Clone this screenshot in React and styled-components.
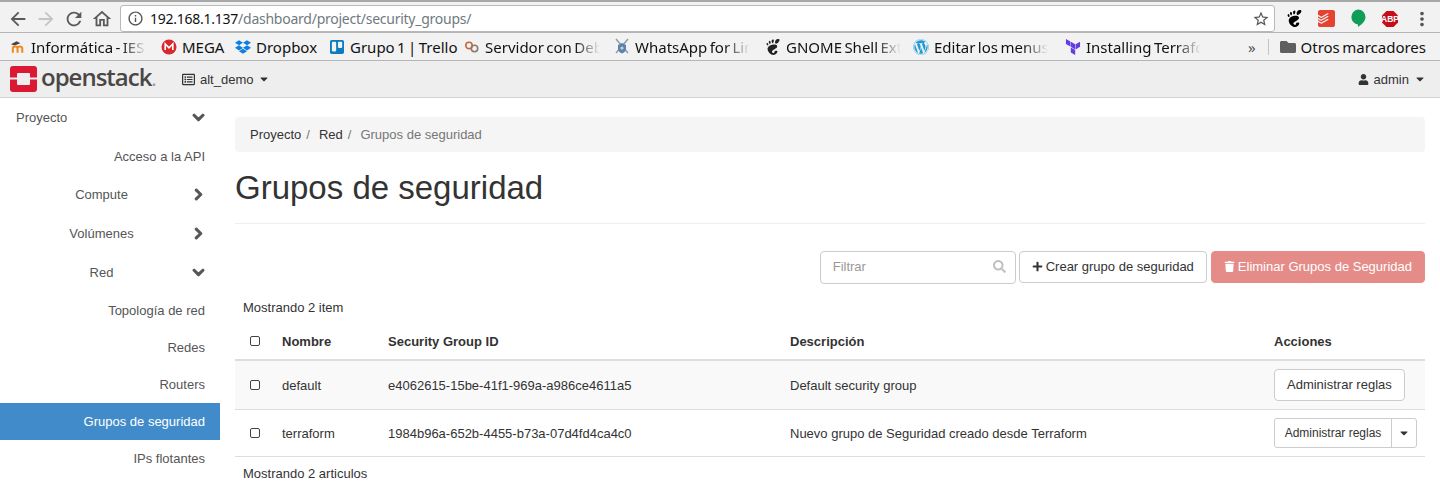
import React from 'react'
import styled, { createGlobalStyle } from 'styled-components'
import { MdArrowBack, MdArrowForward, MdRefresh, MdOutlineHome, MdInfoOutline, MdStarBorder, MdMoreVert } from 'react-icons/md'
import { FaChevronDown, FaChevronRight, FaUser, FaSearch, FaPlus, FaTrash, FaDropbox, FaTrello, FaWordpress, FaFolder, FaCaretDown, FaRegListAlt } from 'react-icons/fa'
import { SiGnome, SiTerraform, SiTodoist } from 'react-icons/si'

const Global = createGlobalStyle`
  html, body { margin: 0; padding: 0; height: 485px; overflow: hidden; background: #fff; }
  body { font-family: "Liberation Sans", Arial, sans-serif; font-size: 13px; color: #333; }
  * { box-sizing: border-box; }
`

// ---------- browser chrome ----------
const Toolbar = styled.div`
  height: 32px;
  display: flex;
  align-items: center;
  padding: 3px 0 0 4px;
  background: #f2f2f2;
  border-top: 2px solid #a8a8a8;
`
const NavButton = styled.span`
  width: 28px;
  display: flex;
  justify-content: center;
  font-size: 22px;
  color: ${p => (p.$off ? '#c4c4c4' : '#5a5a5a')};
`
const UrlBar = styled.div`
  width: 1155px;
  height: 27px;
  margin-left: 4px;
  display: flex;
  align-items: center;
  padding: 0 4px 0 6px;
  background: #fff;
  border: 1px solid #b8b8b8;
  border-radius: 3px;
  font: 14px "Noto Sans", sans-serif;
  letter-spacing: -0.25px;
  color: #111;
`
const UrlPath = styled.span`
  color: #6f7a80;
`
const UrlInfo = styled.span`
  display: flex;
  font-size: 17px;
  color: #555;
  margin-right: 6px;
`
const UrlStar = styled.span`
  display: flex;
  margin-left: auto;
  font-size: 18px;
  color: #555;
`
const Extensions = styled.div`
  display: flex;
  align-items: center;
  margin-left: 3px;
`
const Extension = styled.span`
  width: 32px;
  display: flex;
  justify-content: center;
  align-items: center;
  font-size: ${p => p.$size || 17}px;
  color: ${p => p.$color || '#000'};
`
const Bookmarks = styled.div`
  height: 29px;
  display: flex;
  align-items: center;
  padding: 0 14px 0 10px;
  background: #f2f2f2;
  border-top: 1px solid #b5b5b5;
  border-bottom: 1px solid #b5b5b5;
  font: 15px "Noto Sans", sans-serif;
  word-spacing: -1.5px;
  color: #111;
`
const Bookmark = styled.div`
  display: flex;
  align-items: center;
  gap: 5px;
  flex: none;
  width: ${p => (p.$width ? `${p.$width}px` : 'auto')};
`
const BookmarkIcon = styled.span`
  width: 16px;
  height: 16px;
  display: flex;
  align-items: center;
  justify-content: center;
  flex: none;
  font-size: 16px;
  color: ${p => p.$color || '#333'};
`
const BookmarkText = styled.span`
  white-space: nowrap;
  ${p => p.$faded && `
    width: ${p.$faded}px;
    -webkit-mask-image: linear-gradient(to right, #000 78%, transparent 100%);
    mask-image: linear-gradient(to right, #000 78%, transparent 100%);
  `}
`
const MoreBookmarks = styled.span`
  margin-left: auto;
  font-size: 15px;
  color: #555;
`
const BookmarkDivider = styled.span`
  width: 1px;
  height: 16px;
  margin: 0 11px 0 12px;
  background: #c4c4c4;
`

// ---------- openstack top bar ----------
const TopBar = styled.div`
  height: 37px;
  display: flex;
  align-items: center;
  padding: 0 14px 0 10px;
  background: #eeeeee;
  border-bottom: 1px solid #d4d4d4;
`
const Logo = styled.div`
  display: flex;
  align-items: center;
  gap: 4px;
  width: 172px;
`
const LogoText = styled.span`
  font: 600 24px/26px "Open Sans", sans-serif;
  letter-spacing: -1px;
  color: #4a4746;
  margin-top: -3px;
`
const LogoDot = styled.span`
  color: #a0a0a0;
  font-size: 18px;
`
const MenuToggle = styled.span`
  display: flex;
  align-items: center;
  gap: 5px;
  color: #333;
  ${p => p.$right && 'margin-left: auto;'}
`
const SmallCaret = styled(FaCaretDown)`
  font-size: 12px;
`

// ---------- layout ----------
const Body = styled.div`
  display: flex;
`
const Sidebar = styled.nav`
  width: 220px;
  flex: none;
`
const SideRow = styled.div`
  height: ${p => (p.$sub ? '37px' : '38.8px')};
  display: flex;
  align-items: center;
  padding: 0 15px 0 ${p => (p.$top ? '16px' : '12px')};
  color: ${p => (p.$active ? '#fff' : '#555')};
  background: ${p => (p.$active ? '#428bca' : 'transparent')};
`
const SideLabel = styled.span`
  flex: 1;
  text-align: ${p => p.$align || 'center'};
`
const SideArrow = styled.span`
  display: flex;
  width: 14px;
  justify-content: center;
  font-size: 13px;
  color: #555;
  svg { stroke: #555; stroke-width: 40px; }
`
const Main = styled.main`
  width: 1190px;
  margin-left: 15px;
  padding-top: 19px;
`
const Breadcrumb = styled.div`
  height: 35px;
  display: flex;
  align-items: center;
  padding: 0 15px;
  background: #f5f5f5;
  border-radius: 4px;
  color: #777;
`
const Crumb = styled.span`
  color: #333;
`
const CrumbSep = styled.span`
  color: #777;
  padding: 0 9px 0 5px;
`
const Title = styled.h1`
  margin: 17px 0 0;
  padding-bottom: 17px;
  font-weight: 400;
  font-size: 33px;
  line-height: 37px;
  color: #333;
  border-bottom: 1px solid #eee;
`
const Actions = styled.div`
  display: flex;
  justify-content: flex-end;
  gap: 3px;
  margin-top: 27px;
`
const SearchBox = styled.div`
  width: 196px;
  height: 33px;
  display: flex;
  align-items: center;
  justify-content: space-between;
  padding: 0 9px 2px 12px;
  border: 1px solid #ccc;
  border-radius: 4px;
  color: #999;
  font-size: 13px;
`
const SearchIcon = styled(FaSearch)`
  font-size: 13px;
  color: #c2c2c2;
`
const Button = styled.button`
  height: ${p => p.$height || 32}px;
  padding: 0 12px 1px;
  display: inline-flex;
  align-items: center;
  gap: 3px;
  font: ${p => p.$size || 13}px "Liberation Sans", Arial, sans-serif;
  color: ${p => (p.$danger ? '#fff' : '#333')};
  background: ${p => (p.$danger ? '#e68c88' : '#fff')};
  border: 1px solid ${p => (p.$danger ? '#e68c88' : '#ccc')};
  border-radius: 4px;
  margin-left: ${p => (p.$gap ? '1px' : '0')};
`
const Counter = styled.div`
  padding: 0 8px;
  line-height: 15px;
  color: #333;
  margin-top: ${p => p.$top}px;
`
const Grid = styled.div`
  display: grid;
  grid-template-columns: 47px 106px 402px 484px 151px;
  align-items: center;
  height: ${p => p.$height}px;
  background: ${p => (p.$striped ? '#f9f9f9' : '#fff')};
  border-bottom: ${p => p.$line || 1}px solid #ddd;
  font-weight: ${p => (p.$head ? 700 : 400)};
`
const TableHead = styled(Grid)`
  margin-top: 8px;
`
const Check = styled.span`
  display: block;
  width: 10px;
  height: 10px;
  margin-left: 14.5px;
  background: #fff;
  border: 1px solid #444;
  border-radius: 2px;
`
const SplitButton = styled.div`
  display: inline-flex;
  width: 143px;
  height: 30px;
  border: 1px solid #ccc;
  border-radius: 3px;
  background: #fff;
  font-size: 12px;
  color: #333;
`
const SplitLabel = styled.span`
  flex: 1;
  display: flex;
  align-items: center;
  justify-content: center;
  border-right: 1px solid #ccc;
`
const SplitCaret = styled.span`
  width: 24px;
  display: flex;
  align-items: center;
  justify-content: center;
`

const MegaIcon = () => (
  <svg width="16" height="16" viewBox="0 0 16 16">
    <circle cx="8" cy="8" r="7.5" fill="#d9272e" />
    <path d="M4.2 11V5l3.8 3.8L11.8 5v6" fill="none" stroke="#fff" strokeWidth="1.6" />
  </svg>
)
const MoodleIcon = () => (
  <svg width="17" height="16" viewBox="0 0 17 16">
    <path d="M1 5l6-3 4 2-6 2.500z" fill="#444" />
    <path d="M3 14V9.500C3 8 4 7.500 5.500 7.500S8 8 8 9.500V14M8 9.500C8 8 9 7.500 10.500 7.500S13 8 13 9.500V14" fill="none" stroke="#f18a21" strokeWidth="2.200" />
  </svg>
)
const ServerIcon = () => (
  <svg width="16" height="16" viewBox="0 0 16 16" fill="none" stroke="#c7673a" strokeWidth="1.6">
    <circle cx="5" cy="6.5" r="3.2" />
    <circle cx="10.5" cy="9.5" r="3.2" stroke="#8c7a70" />
  </svg>
)
const ShieldIcon = () => (
  <svg width="16" height="18" viewBox="0 0 16 18">
    <path d="M2 1l12 14M14 1L2 15" stroke="#8d9aa5" strokeWidth="1.4" />
    <path d="M8 5l4 2v4c0 2-2 3.5-4 4.5C6 14.500 4 13 4 11V7z" fill="#5b82b8" />
    <circle cx="8" cy="10" r="1.6" fill="#d9d3a8" />
  </svg>
)
const HangoutsIcon = () => (
  <svg width="16" height="19" viewBox="0 0 16 19">
    <path d="M8 .5a7.500 7.500 0 0 1 7.500 7.500c0 4.500-4 7.500-7.500 10v-2.600A7.500 7.500 0 0 1 8 .5z" fill="#0f9d58" />
  </svg>
)
const AbpIcon = () => (
  <svg width="18" height="18" viewBox="0 0 18 18">
    <path d="M5.500 1h7L17 5.500v7L12.500 17h-7L1 12.500v-7z" fill="#c70d17" />
    <text x="9" y="12" textAnchor="middle" fontSize="8.500" fontWeight="700" fontFamily="Liberation Sans, sans-serif" fill="#fff">ABP</text>
  </svg>
)
const OpenstackLogo = () => (
  <svg width="27" height="26" viewBox="0 0 27 26">
    <path fillRule="evenodd" d="M3 0h21a3 3 0 0 1 3 3v20a3 3 0 0 1-3 3H3a3 3 0 0 1-3-3V3a3 3 0 0 1 3-3zM8 7a1 1 0 0 0-1 1v10a1 1 0 0 0 1 1h11a1 1 0 0 0 1-1V8a1 1 0 0 0-1-1z" fill="#da1a32" />
    <path d="M0 11.500h7v2H0zM20 11.500h7v2h-7z" fill="#eee" />
  </svg>
)

const BOOKMARKS = [
  { icon: <MoodleIcon />, text: 'Informática - IES', faded: 116, width: 151 },
  { icon: <MegaIcon />, text: 'MEGA', width: 74 },
  { icon: <FaDropbox />, color: '#0d7fe0', text: 'Dropbox', width: 94 },
  { icon: <FaTrello />, color: '#0c7cbd', text: 'Grupo 1 | Trello', width: 135 },
  { icon: <ServerIcon />, text: 'Servidor con Deb', faded: 115, width: 150 },
  { icon: <ShieldIcon />, text: 'WhatsApp for Lin', faded: 115, width: 151 },
  { icon: <SiGnome />, color: '#222', text: 'GNOME Shell Ext', faded: 115, width: 148 },
  { icon: <FaWordpress />, color: '#1e9ad6', text: 'Editar los menus', faded: 114, width: 152 },
  { icon: <SiTerraform />, color: '#623ce4', text: 'Installing Terrafo', faded: 115, width: 136 },
]

const SIDE = [
  { label: 'Proyecto', top: true, align: 'left', arrow: 'down' },
  { label: 'Acceso a la API', align: 'right' },
  { label: 'Compute', arrow: 'right' },
  { label: 'Volúmenes', arrow: 'right' },
  { label: 'Red', arrow: 'down' },
  { label: 'Topología de red', align: 'right', sub: true },
  { label: 'Redes', align: 'right', sub: true },
  { label: 'Routers', align: 'right', sub: true },
  { label: 'Grupos de seguridad', align: 'right', sub: true, active: true },
  { label: 'IPs flotantes', align: 'right', sub: true },
]

export default function App() {
  return (
    <>
      <Global />
      <Toolbar>
        <NavButton><MdArrowBack /></NavButton>
        <NavButton $off><MdArrowForward /></NavButton>
        <NavButton><MdRefresh /></NavButton>
        <NavButton><MdOutlineHome /></NavButton>
        <UrlBar>
          <UrlInfo><MdInfoOutline /></UrlInfo>
          192.168.1.137<UrlPath>/dashboard/project/security_groups/</UrlPath>
          <UrlStar><MdStarBorder /></UrlStar>
        </UrlBar>
        <Extensions>
          <Extension><SiGnome /></Extension>
          <Extension $color="#e44332"><SiTodoist /></Extension>
          <Extension><HangoutsIcon /></Extension>
          <Extension><AbpIcon /></Extension>
          <Extension $color="#555" $size={22}><MdMoreVert /></Extension>
        </Extensions>
      </Toolbar>
      <Bookmarks>
        {BOOKMARKS.map(b => (
          <Bookmark key={b.text} $width={b.width}>
            <BookmarkIcon $color={b.color}>{b.icon}</BookmarkIcon>
            <BookmarkText $faded={b.faded}>{b.text}</BookmarkText>
          </Bookmark>
        ))}
        <MoreBookmarks>»</MoreBookmarks>
        <BookmarkDivider />
        <Bookmark>
          <BookmarkIcon $color="#5f5f5f"><FaFolder /></BookmarkIcon>
          <BookmarkText>Otros marcadores</BookmarkText>
        </Bookmark>
      </Bookmarks>
      <TopBar>
        <Logo>
          <OpenstackLogo />
          <LogoText>openstack<LogoDot>.</LogoDot></LogoText>
        </Logo>
        <MenuToggle><FaRegListAlt />alt_demo<SmallCaret /></MenuToggle>
        <MenuToggle $right><FaUser size={11} />admin<SmallCaret /></MenuToggle>
      </TopBar>
      <Body>
        <Sidebar>
          {SIDE.map(s => (
            <SideRow key={s.label} $top={s.top} $sub={s.sub} $active={s.active}>
              <SideLabel $align={s.align}>{s.label}</SideLabel>
              {s.arrow && (
                <SideArrow>{s.arrow === 'down' ? <FaChevronDown /> : <FaChevronRight />}</SideArrow>
              )}
            </SideRow>
          ))}
        </Sidebar>
        <Main>
          <Breadcrumb>
            <Crumb>Proyecto</Crumb><CrumbSep>/</CrumbSep>
            <Crumb>Red</Crumb><CrumbSep>/</CrumbSep>
            Grupos de seguridad
          </Breadcrumb>
          <Title>Grupos de seguridad</Title>
          <Actions>
            <SearchBox>Filtrar<SearchIcon /></SearchBox>
            <Button><FaPlus size={11} />Crear grupo de seguridad</Button>
            <Button $danger $gap><FaTrash size={11} />Eliminar Grupos de Seguridad</Button>
          </Actions>
          <Counter $top={16}>Mostrando 2 item</Counter>
          <TableHead $head $height={38} $line={2}>
            <Check />
            <span>Nombre</span>
            <span>Security Group ID</span>
            <span>Descripción</span>
            <span>Acciones</span>
          </TableHead>
          <Grid $striped $height={49}>
            <Check />
            <span>default</span>
            <span>e4062615-15be-41f1-969a-a986ce4611a5</span>
            <span>Default security group</span>
            <span><Button $height={32}>Administrar reglas</Button></span>
          </Grid>
          <Grid $height={47}>
            <Check />
            <span>terraform</span>
            <span>1984b96a-652b-4455-b73a-07d4fd4ca4c0</span>
            <span>Nuevo grupo de Seguridad creado desde Terraform</span>
            <SplitButton>
              <SplitLabel>Administrar reglas</SplitLabel>
              <SplitCaret><SmallCaret /></SplitCaret>
            </SplitButton>
          </Grid>
          <Counter $top={9}>Mostrando 2 articulos</Counter>
        </Main>
      </Body>
    </>
  )
}
